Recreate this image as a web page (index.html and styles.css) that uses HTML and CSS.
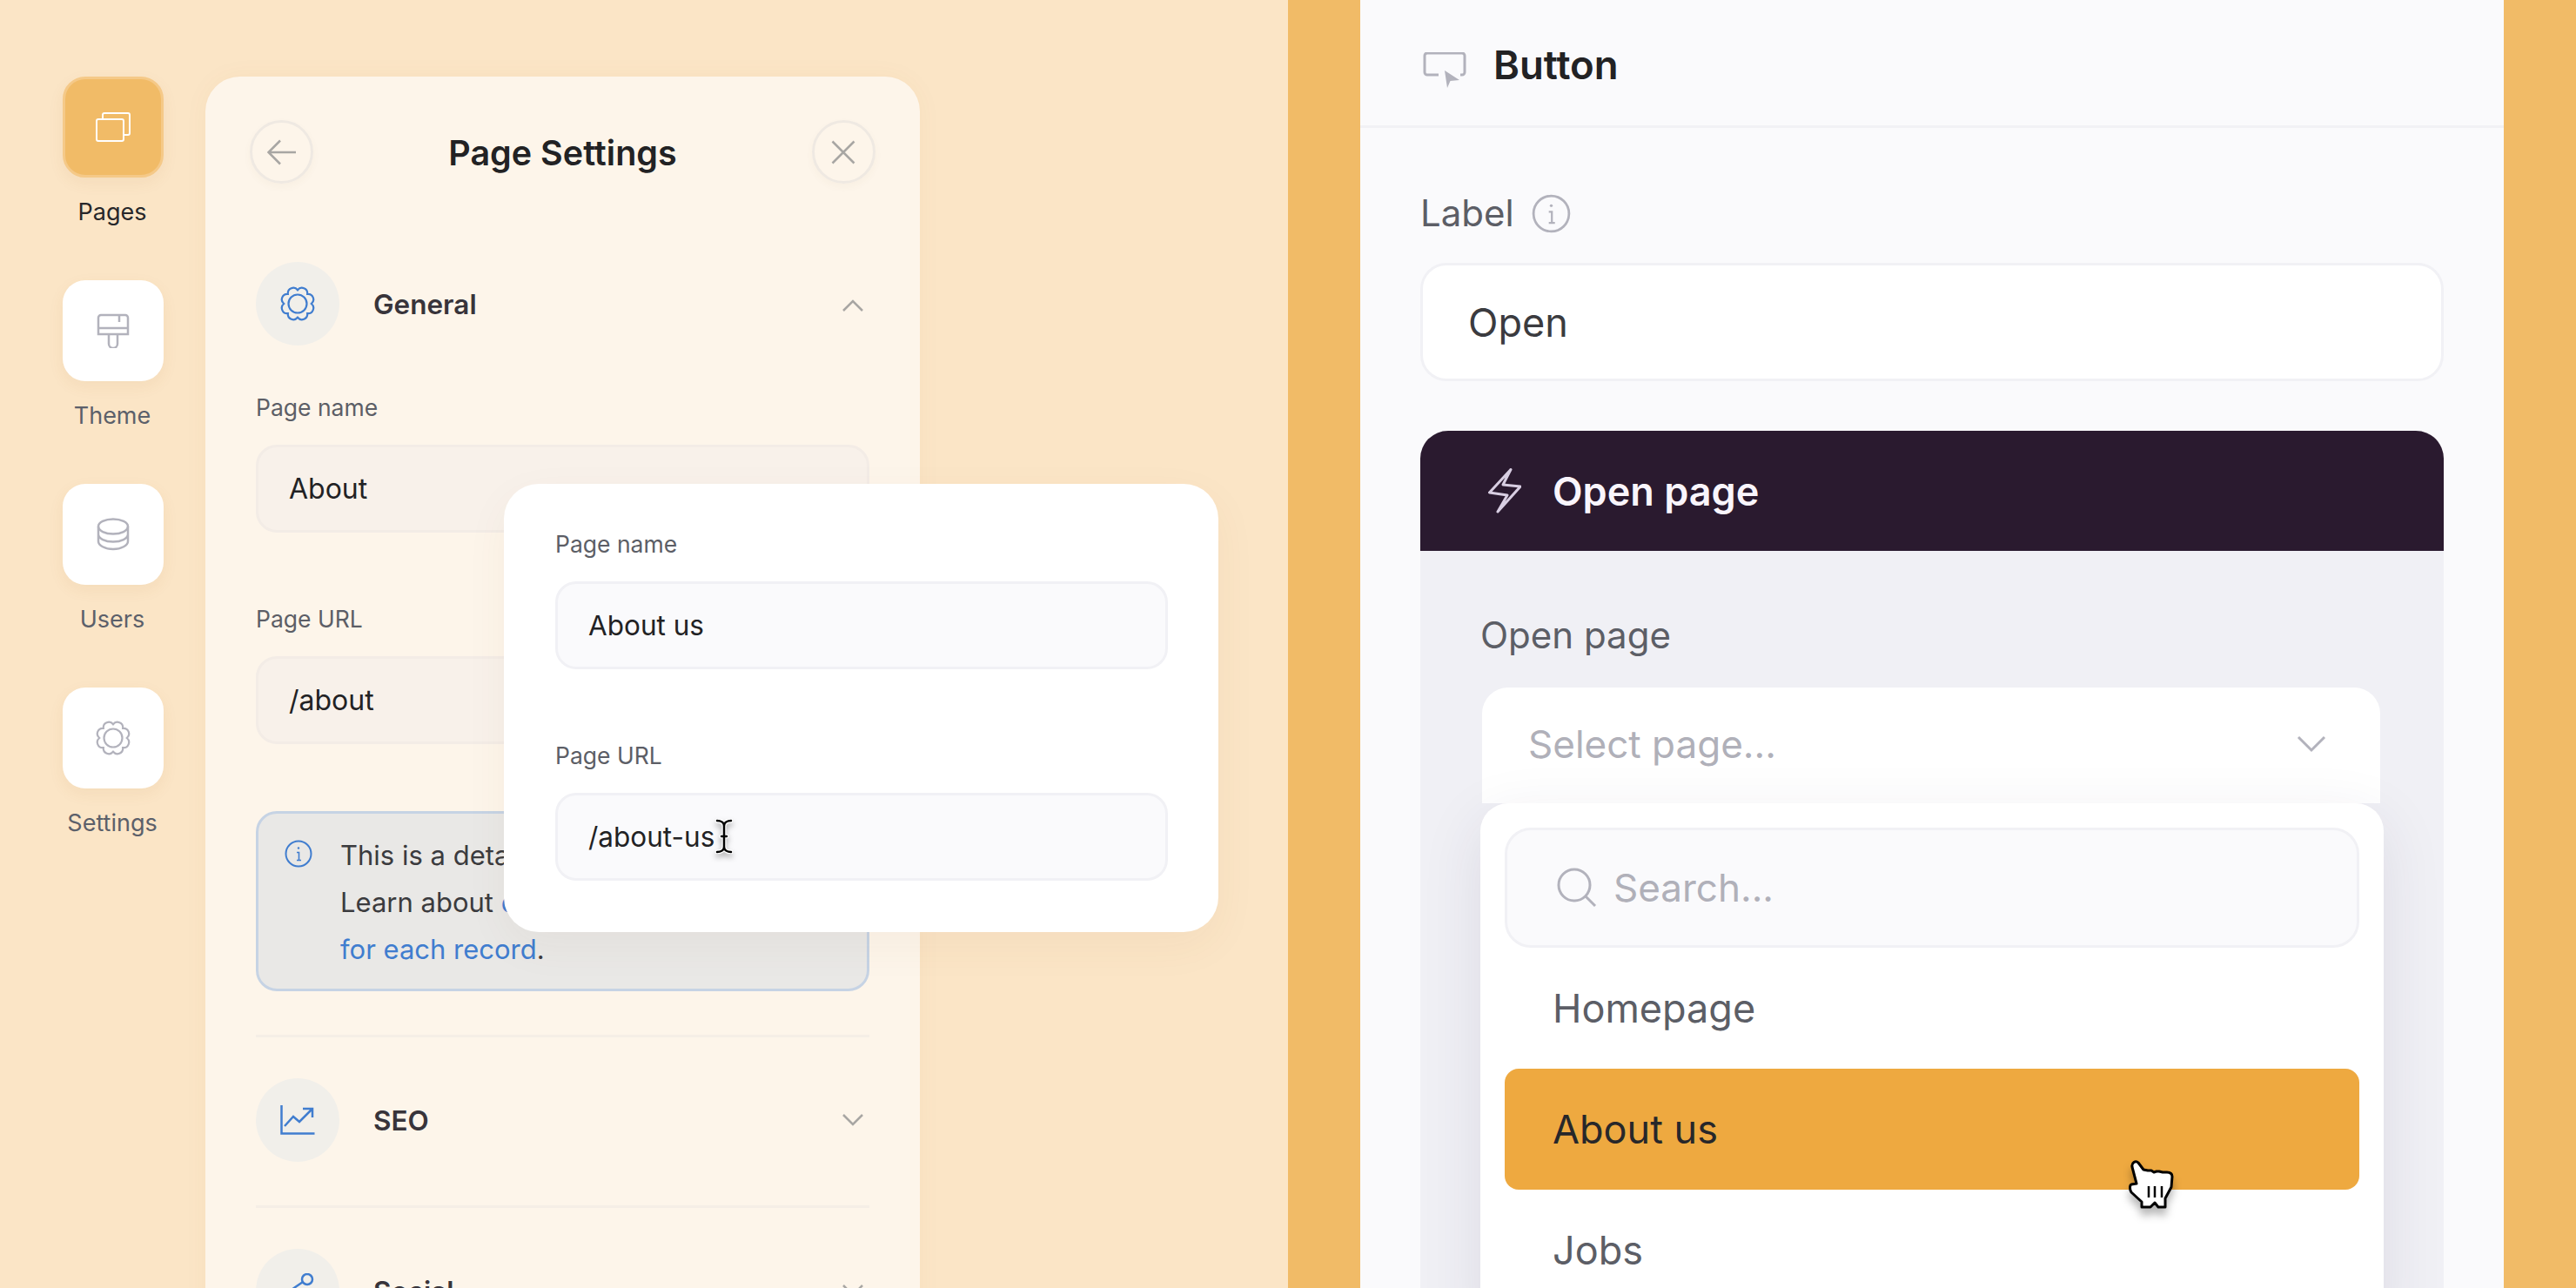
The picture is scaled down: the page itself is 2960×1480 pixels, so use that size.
FILE: index.html
```html
<!DOCTYPE html>
<html lang="en">
<head>
    <meta charset="UTF-8">
    <title>Page Settings</title>
    <link rel="stylesheet" href="styles.css">
</head>
<body>
    <svg class="defs" width="0" height="0">
        <symbol id="gear" viewBox="0 0 40 40">
            <path d="M20 4.200A6.300 6.300 0 0 1 31.170 8.830A6.300 6.300 0 0 1 35.800 20A6.300 6.300 0 0 1 31.170 31.170A6.300 6.300 0 0 1 20 35.800A6.300 6.300 0 0 1 8.830 31.170A6.300 6.300 0 0 1 4.200 20A6.300 6.300 0 0 1 8.830 8.830A6.300 6.300 0 0 1 20 4.200Z"/>
            <circle cx="20" cy="20" r="10.500"/>
        </symbol>
        <symbol id="info" viewBox="0 0 32 32">
            <circle class="ring" cx="16" cy="16" r="14.500"/>
            <path class="stem" d="M14 14.500H16.500V23.500M14 23.500H19"/>
            <circle class="dot" cx="16" cy="9.500" r="1.200"/>
        </symbol>
    </svg>

    <div class="split">
        <!-- Left half: page settings -->
        <section class="left">
            <nav class="nav">
                <div class="nav-item active">
                    <div class="tile">
                        <svg class="icon" width="40" height="34" viewBox="0 0 40 34">
                            <rect x="1" y="8" width="31" height="25" rx="2"/>
                            <path d="M8 8V3a2 2 0 0 1 2-2h27a2 2 0 0 1 2 2v21a2 2 0 0 1-2 2h-5"/>
                        </svg>
                    </div>
                    <span>Pages</span>
                </div>
                <div class="nav-item">
                    <div class="tile">
                        <svg class="icon" width="38" height="40" viewBox="0 0 38 40">
                            <path d="M5 2h28a3 3 0 0 1 3 3v19H2V5a3 3 0 0 1 3-3ZM2 17h34M26 2v8M14 24v11a5 5 0 0 0 10 0V24"/>
                        </svg>
                    </div>
                    <span>Theme</span>
                </div>
                <div class="nav-item">
                    <div class="tile">
                        <svg class="icon" width="38" height="38" viewBox="0 0 38 38">
                            <ellipse cx="19" cy="10" rx="17" ry="8.500"/>
                            <path d="M2 10v17c0 4.700 7.600 9 17 9s17-4.300 17-9V10M2 19c0 4.700 7.600 8.500 17 8.500S36 23.700 36 19"/>
                        </svg>
                    </div>
                    <span>Users</span>
                </div>
                <div class="nav-item">
                    <div class="tile">
                        <svg class="icon" width="40" height="40"><use href="#gear"/></svg>
                    </div>
                    <span>Settings</span>
                </div>
            </nav>

            <div class="panel">
                <div class="panel-top">
                    <button class="round-btn">
                        <svg class="icon-line" width="34" height="30" viewBox="0 0 34 30">
                            <path d="M33 15H2M15 1.500 1.500 15 15 28.500"/>
                        </svg>
                    </button>
                    <h1>Page Settings</h1>
                    <button class="round-btn">
                        <svg class="icon-line" width="28" height="28" viewBox="0 0 28 28">
                            <path d="M1.500 1.500 26.500 26.500M26.500 1.500 1.500 26.500"/>
                        </svg>
                    </button>
                </div>

                <div class="section-head">
                    <div class="badge">
                        <svg class="icon-blue" width="40" height="40"><use href="#gear"/></svg>
                    </div>
                    <span class="section-title">General</span>
                    <svg class="icon-line chev up" width="24" height="14" viewBox="0 0 24 14">
                        <path d="M1 13 12 2 23 13"/>
                    </svg>
                </div>

                <div class="field first">
                    <label>Page name</label>
                    <div class="text-input">About</div>
                </div>
                <div class="field">
                    <label>Page URL</label>
                    <div class="text-input">/about</div>
                </div>

                <div class="alert">
                    <svg class="icon-blue alert-icon" width="32" height="32"><use href="#info"/></svg>
                    <p>This is a detail page for each<br>Learn about <a>dynamic page URLs<br>for each record</a>.</p>
                </div>

                <div class="section-head bordered">
                    <div class="badge">
                        <svg class="icon-blue" width="40" height="34" viewBox="0 0 40 34">
                            <path d="M1.500 0V32.500H39.500M5 24 15 13 22 19 36 5M26 4H37V14"/>
                        </svg>
                    </div>
                    <span class="section-title">SEO</span>
                    <svg class="icon-line chev" width="24" height="14" viewBox="0 0 24 14">
                        <path d="M1 1 12 12 23 1"/>
                    </svg>
                </div>

                <div class="section-head bordered">
                    <div class="badge">
                        <svg class="icon-blue" width="40" height="40" viewBox="0 0 40 40">
                            <circle cx="31" cy="7" r="6"/>
                            <circle cx="6" cy="24" r="5"/>
                            <circle cx="31" cy="33" r="5"/>
                            <path d="M26 10 10 21M10 26 27 32"/>
                        </svg>
                    </div>
                    <span class="section-title">Social</span>
                    <svg class="icon-line chev" width="24" height="14" viewBox="0 0 24 14">
                        <path d="M1 1 12 12 23 1"/>
                    </svg>
                </div>
            </div>

            <!-- Popup lying over the settings panel -->
            <div class="popup">
                <div class="field first">
                    <label>Page name</label>
                    <div class="text-input">About us</div>
                </div>
                <div class="field">
                    <label>Page URL</label>
                    <div class="text-input">/about-us</div>
                </div>
                <svg class="text-cursor" width="20" height="40" viewBox="0 0 20 40">
                    <path class="cursor-under" d="M2 2C6 2 10 4 10 8V32C10 36 6 38 2 38M18 2C14 2 10 4 10 8M18 38C14 38 10 36 10 32M7 20H13"/>
                    <path class="cursor-over" d="M2 2C6 2 10 4 10 8V32C10 36 6 38 2 38M18 2C14 2 10 4 10 8M18 38C14 38 10 36 10 32M7 20H13"/>
                </svg>
            </div>
        </section>

        <!-- Right half: button settings -->
        <section class="right">
            <div class="sheet">
                <header class="sheet-head">
                    <svg class="icon-grey head-icon" width="50" height="42" viewBox="0 0 50 42">
                        <path d="M18 26H5a3 3 0 0 1-3-3V4a3 3 0 0 1 3-3h40a3 3 0 0 1 3 3v19a3 3 0 0 1-3 3h-2"/>
                        <path class="solid" d="M25 21 28 41 31.500 33 42 32Z"/>
                    </svg>
                    <h2>Button</h2>
                </header>

                <div class="sheet-body">
                    <div class="big-label">
                        Label
                        <svg class="icon-grey" width="45" height="45"><use href="#info"/></svg>
                    </div>
                    <div class="big-input">Open</div>

                    <div class="action">
                        <div class="action-head">
                            <svg class="bolt" width="38" height="52" viewBox="0 0 38 52">
                                <path d="M26 1.500 1.500 28 22 31 11 50 37 21 17 19Z"/>
                            </svg>
                            <span>Open page</span>
                        </div>
                        <div class="action-body">
                            <div class="big-label">Open page</div>
                            <div class="select">
                                <span>Select page...</span>
                                <svg class="icon-grey" width="34" height="20" viewBox="0 0 34 20">
                                    <path d="M2 2 17 17 32 2"/>
                                </svg>
                            </div>
                            <div class="dropdown">
                                <div class="search">
                                    <svg class="icon-grey" width="46" height="46" viewBox="0 0 46 46">
                                        <circle cx="20" cy="20" r="18"/>
                                        <path d="M33 33 44 44"/>
                                    </svg>
                                    <span>Search...</span>
                                </div>
                                <div class="option">Homepage</div>
                                <div class="option selected">About us</div>
                                <div class="option">Jobs</div>
                            </div>
                        </div>
                    </div>
                </div>
            </div>

            <svg class="hand" width="52" height="56" viewBox="-1 -1 52 56">
                <path class="hand-shape" d="M3 7C2 2 7 -1 10 2L16 10 21 11 25 11 28 13 31 12 34 12 38 13 43 13C47 13 49 15 49 18L48 30 41 43V53H33L29 48 24 53H14V47L2 36C0 33 0 28 2 27L8 26Z"/>
                <path class="hand-lines" d="M22 29V42M29 29V42M37 29V42"/>
            </svg>
        </section>
    </div>
</body>
</html>
```

FILE: styles.css
```css
* {
    box-sizing: border-box;
}

html,
body {
    margin: 0;
    padding: 0;
    height: 1480px;
    overflow: hidden;
}

body {
    font-family: Inter, "Noto Sans", sans-serif;
    color: #27272a;
}

.defs {
    display: block;
    height: 0;
}

#gear,
#info {
    fill: none;
}

#gear path,
#gear circle {
    stroke-width: 2.200;
}

#info .ring {
    stroke-width: 2;
}

#info .stem {
    stroke-width: 1.600;
}

.split {
    display: grid;
    grid-template-columns: 1480px 1480px;
    height: 1480px;
}

/* Left half */
.left {
    position: relative;
    display: flex;
    gap: 48px;
    padding: 88px 0 0 72px;
    background-color: #fbe5c6;
    overflow: hidden;
}

.nav {
    display: flex;
    flex-direction: column;
    gap: 61px;
    width: 116px;
}

.nav-item {
    display: flex;
    flex-direction: column;
    align-items: center;
    gap: 23px;
    font-size: 27px;
    line-height: 34px;
    color: #5c606a;
}

.nav-item span {
    margin-right: 2px;
}

.nav-item.active {
    color: #27272a;
}

.tile {
    display: flex;
    align-items: center;
    justify-content: center;
    width: 116px;
    height: 116px;
    background-color: #fff;
    border-radius: 26px;
    box-shadow: 0 6px 18px rgba(150, 100, 30, 0.07);
}

.nav-item.active .tile {
    background-color: #f1bb67;
    border: 3px solid #f5c988;
}

.icon {
    fill: none;
    stroke: #b2b2bc;
    stroke-width: 2.500;
}

.nav-item.active .icon {
    stroke: #fff;
    stroke-width: 2;
}

.panel {
    width: 821px;
    height: 1500px;
    padding: 50px 58px 0 58px;
    background-color: #fdf5ea;
    border-radius: 40px 40px 0 0;
    box-shadow: 0 0 30px rgba(150, 100, 30, 0.04);
}

.panel-top {
    display: flex;
    align-items: center;
    justify-content: space-between;
    margin: 0 -7px 90px -7px;
}

.panel-top h1 {
    margin: 0;
    padding-top: 4px;
    font-size: 39.500px;
    font-weight: 600;
    line-height: 69px;
    color: #222224;
}

.round-btn {
    display: flex;
    align-items: center;
    justify-content: center;
    width: 73px;
    height: 73px;
    padding: 0;
    background: transparent;
    border: 3px solid #efe9e2;
    border-radius: 50%;
    box-shadow: 0 4px 10px rgba(120, 90, 50, 0.04);
}

.icon-line {
    fill: none;
    stroke: #a8a6a3;
    stroke-width: 2.500;
}

.icon-blue {
    fill: none;
    color: #407dcf;
    stroke: #407dcf;
    stroke-width: 2.500;
}

.icon-grey {
    fill: none;
    color: #b2b2bc;
    stroke: #b2b2bc;
    stroke-width: 3;
    flex: none;
}

.icon-grey .solid {
    fill: #b2b2bc;
    stroke: none;
}

.dot {
    fill: currentColor;
    stroke: none;
}

.section-head {
    display: flex;
    align-items: center;
    gap: 39px;
}

.section-head.bordered {
    margin-top: 50px;
    padding-top: 47px;
    border-top: 3px solid #f5eee6;
}

.badge {
    display: flex;
    align-items: center;
    justify-content: center;
    width: 96px;
    height: 96px;
    background-color: #f1efea;
    border-radius: 50%;
}

.section-title {
    flex: 1;
    font-size: 31.500px;
    font-weight: 600;
    color: #38343a;
}

.chev {
    margin-right: 7px;
}

.chev.up {
    margin-top: 4px;
}

.field {
    margin-top: 79px;
}

.field.first {
    margin-top: 51px;
}

.field label {
    display: block;
    margin-bottom: 23px;
    font-size: 26.500px;
    line-height: 40px;
    color: #5c5e66;
}

.text-input {
    display: flex;
    align-items: center;
    height: 101px;
    padding-left: 35px;
    font-size: 32px;
    color: #222224;
    background-color: #f8f1ea;
    border: 3px solid #f3ece6;
    border-radius: 24px;
}

.alert {
    display: flex;
    gap: 32px;
    height: 207px;
    margin-top: 77px;
    padding: 21px 30px;
    background-color: #e9e8e6;
    border: 3px solid #c6d3e4;
    border-radius: 24px;
}

.alert-icon {
    flex: none;
    margin-top: 9px;
}

.alert p {
    margin: 0;
    font-size: 31px;
    line-height: 54px;
    color: #3b3b3e;
    white-space: nowrap;
}

.alert a {
    color: #407dcf;
}

/* Popup */
.popup {
    position: absolute;
    left: 579px;
    top: 556px;
    width: 821px;
    height: 515px;
    padding: 0 58px 0 59px;
    background-color: #fff;
    border-radius: 40px;
    box-shadow: 0 16px 50px rgba(120, 80, 30, 0.05);
}

.popup .field.first {
    margin-top: 49px;
}

.popup .text-input {
    font-size: 31.500px;
    background-color: #fafafc;
    border-color: #f1f1f5;
}

.text-cursor {
    position: absolute;
    left: 243px;
    top: 385px;
    fill: none;
    stroke-linecap: round;
    filter: drop-shadow(0 4px 3px rgba(0, 0, 0, 0.3));
}

.cursor-under {
    stroke: #fff;
    stroke-width: 5;
}

.cursor-over {
    stroke: #000;
    stroke-width: 2.500;
}

/* Right half */
.right {
    position: relative;
    padding: 0 83px;
    background-color: #f1bb67;
    overflow: hidden;
}

.sheet {
    height: 1480px;
    background-color: #fafafc;
}

.sheet-head {
    display: flex;
    align-items: center;
    gap: 31px;
    height: 147px;
    padding: 4px 0 0 72px;
    border-bottom: 3px solid #f1f1f5;
}

.head-icon {
    margin-top: 14px;
}

.sheet-head h2 {
    margin: 0;
    font-size: 45.500px;
    font-weight: 600;
    color: #222224;
}

.sheet-body {
    padding: 74px 69px 0;
}

.big-label {
    display: flex;
    align-items: center;
    gap: 20px;
    font-size: 42px;
    line-height: 48px;
    color: #5c5e66;
}

.big-input {
    display: flex;
    align-items: center;
    height: 136px;
    margin-top: 33px;
    padding-left: 52px;
    font-size: 45px;
    color: #3b3b3f;
    background-color: #fff;
    border: 3px solid #f1f1f5;
    border-radius: 30px;
}

.action {
    margin-top: 57px;
}

.action-head {
    display: flex;
    align-items: center;
    gap: 36px;
    height: 138px;
    padding-left: 78px;
    font-size: 45px;
    font-weight: 600;
    color: #f9f5fc;
    background-color: #2a1a2f;
    border-radius: 32px 32px 0 0;
}

.bolt {
    fill: none;
    stroke: #d8cee2;
    stroke-width: 3;
    stroke-linejoin: round;
}

.action-body {
    height: 900px;
    padding: 73px 71px 0 69px;
    background-color: #f0f0f5;
}

.select {
    display: flex;
    align-items: center;
    justify-content: space-between;
    height: 133px;
    margin: 36px 2px 0;
    padding: 0 62px 4px 53px;
    font-size: 44px;
    color: #b0b0b9;
    background-color: #fff;
    border-radius: 30px 30px 0 0;
}

.dropdown {
    position: relative;
    padding: 28px;
    margin-right: -2px;
    background-color: #fff;
    border-radius: 32px;
    box-shadow: 0 20px 70px rgba(50, 40, 80, 0.1);
}

.search {
    display: flex;
    align-items: center;
    gap: 19px;
    height: 138px;
    padding-left: 57px;
    font-size: 44px;
    color: #b0b0b9;
    background-color: #fafafc;
    border: 3px solid #f1f1f5;
    border-radius: 30px;
}

.option {
    display: flex;
    align-items: center;
    height: 139px;
    padding-left: 55px;
    font-size: 45px;
    color: #5c5e66;
}

.option.selected {
    color: #27272a;
    background-color: #eea940;
    border-radius: 16px;
}

.hand {
    position: absolute;
    left: 966px;
    top: 1333px;
    filter: drop-shadow(0 8px 5px rgba(0, 0, 0, 0.28));
}

.hand-shape {
    fill: #fff;
    stroke: #000;
    stroke-width: 3;
    stroke-linejoin: round;
}

.hand-lines {
    fill: none;
    stroke: #000;
    stroke-width: 2.500;
}
```
